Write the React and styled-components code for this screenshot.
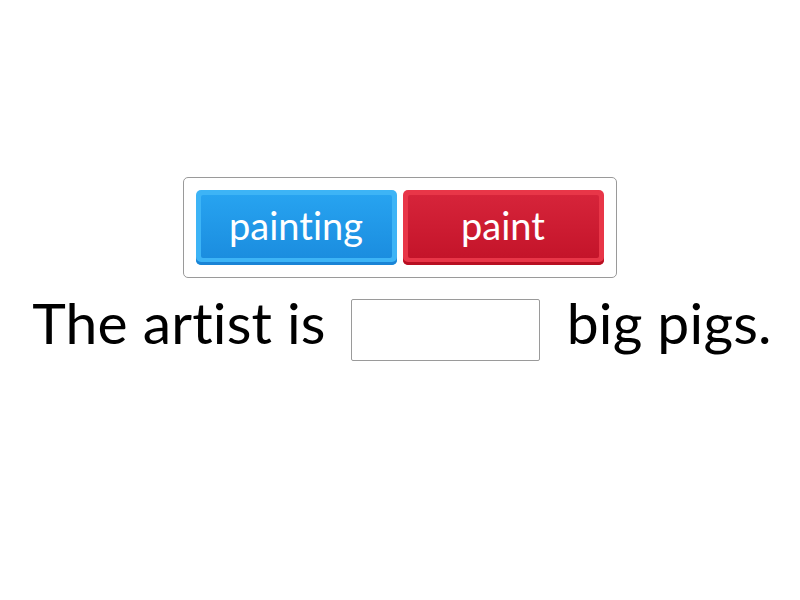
import React from 'react'
import styled, {createGlobalStyle} from 'styled-components'

const Global = createGlobalStyle`
  html, body {
    margin: 0;
    padding: 0;
    background: #fff;
  }
  body {
    font-family: Lato, "Noto Sans", sans-serif;
    font-variant-ligatures: none;
  }
`

const Page = styled.div`
  width: 800px;
  height: 600px;
  display: flex;
  flex-direction: column;
  align-items: center;
  padding-top: 177px;
  box-sizing: border-box;
`

const Options = styled.div`
  display: flex;
  gap: 6px;
  padding: 12px;
  border: 1px solid #9a9a9a;
  border-radius: 5px;
  margin-left: -1px;
`

const palette = {
  blue: {edge: '#3db4f6', top: '#27a3f0', bottom: '#1b8ddf', shade: '#1a84d6'},
  red: {edge: '#e83648', top: '#d6243a', bottom: '#c4142a', shade: '#b80f22'},
}

const Tile = styled.div`
  position: relative;
  width: 201px;
  height: 75px;
  border-radius: 5px;
  background: ${p => palette[p.$tone].edge};
  box-shadow: inset 0 -3px 0 ${p => palette[p.$tone].shade};
  display: flex;
  align-items: center;
  justify-content: center;
  color: #fff;
  font-size: 38px;
  padding-bottom: 6px;
  box-sizing: border-box;
  &::before {
    content: '';
    position: absolute;
    left: 5px;
    right: 5px;
    top: 5px;
    bottom: 7px;
    border-radius: 2px;
    background: linear-gradient(${p => palette[p.$tone].top}, ${p => palette[p.$tone].bottom});
  }
  span {
    position: relative;
  }
`

const Sentence = styled.div`
  display: flex;
  align-items: center;
  margin-top: 4px;
  font-size: 57px;
  letter-spacing: 0.2px;
  color: #000;
  white-space: nowrap;
  margin-left: 4px;
`

const Blank = styled.div`
  width: 187px;
  height: 60px;
  border: 1px solid #9a9a9a;
  border-radius: 2px;
  margin: 17px 27px 0 25px;
`

export default function App() {
  return (
    <Page>
      <Global />
      <Options>
        <Tile $tone="blue"><span>painting</span></Tile>
        <Tile $tone="red"><span>paint</span></Tile>
      </Options>
      <Sentence>
        <span>The artist is</span>
        <Blank />
        <span>big pigs.</span>
      </Sentence>
    </Page>
  )
}
